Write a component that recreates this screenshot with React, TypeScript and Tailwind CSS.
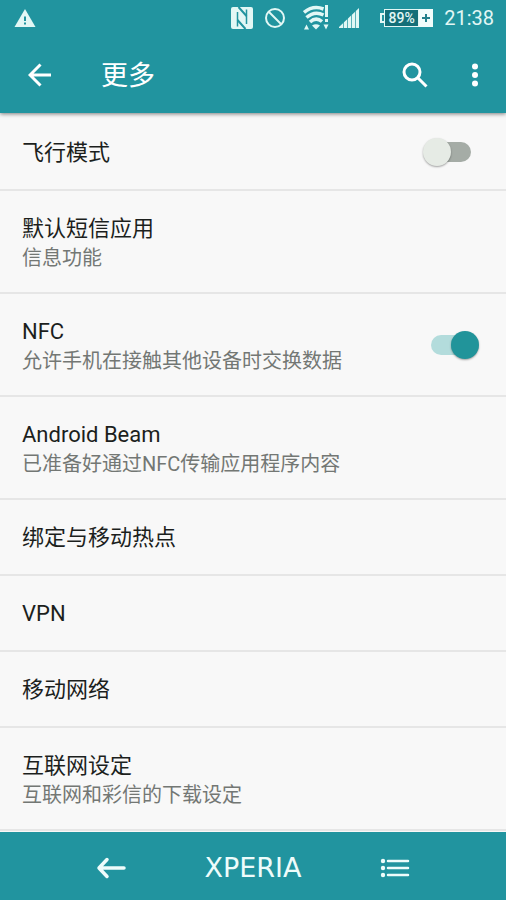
import { useState } from "react";

interface Setting {
  id: string;
  title: string;
  summary?: string;
  toggle?: boolean;
}

const settings: Setting[] = [
  { id: "airplane", title: "飞行模式", toggle: true },
  { id: "sms", title: "默认短信应用", summary: "信息功能" },
  { id: "nfc", title: "NFC", summary: "允许手机在接触其他设备时交换数据", toggle: true },
  { id: "beam", title: "Android Beam", summary: "已准备好通过NFC传输应用程序内容" },
  { id: "tethering", title: "绑定与移动热点" },
  { id: "vpn", title: "VPN" },
  { id: "mobile", title: "移动网络" },
  { id: "internet", title: "互联网设定", summary: "互联网和彩信的下载设定" },
];

const StatusBar = () => (
  <div className="flex h-9 items-center pl-[14px] pr-3 text-[#e2f7f5]">
    <svg width="22" height="20" viewBox="0 0 22 20" aria-hidden="true">
      <path d="M11 1 L21.5 19 H.5 Z" fill="currentColor" />
      <path d="M11 8.5 V13 M11 14.5 V16.5" stroke="#21949f" strokeWidth="2" />
    </svg>
    <div className="ml-auto flex items-center">
      <svg width="22" height="22" viewBox="0 0 22 22" aria-hidden="true">
        <rect x="0" y="0" width="22" height="22" rx="2" fill="currentColor" />
        <path d="M6.500 5 V19.500 M15.500 2.500 V17" stroke="#21949f" strokeWidth="1.5" />
        <path d="M7.500 0 L15.500 9 M6.500 13 L14.500 22" stroke="#21949f" strokeWidth="2" />
      </svg>
      <svg className="ml-3" width="20" height="20" viewBox="0 0 20 20" fill="none" stroke="currentColor" strokeWidth="2" aria-hidden="true">
        <circle cx="10" cy="10" r="9" />
        <path d="M3.500 3.500 L16.500 16.500" />
      </svg>
      <svg className="ml-[18px]" width="26" height="26" viewBox="0 0 26 26" aria-hidden="true">
        <g fill="none" stroke="currentColor" strokeWidth="3.5">
          <path d="M1 7.500 Q10 0 20.500 4" />
          <path d="M3.500 12.500 Q11.500 5.500 20.500 10" />
          <path d="M7 17 Q13 11.500 19 16.500" />
        </g>
        <g fill="currentColor">
          <path d="M9 20.500 Q13 18 17 20.500 L13 24.500 Z" />
          <path d="M1 24.500 L3.500 19.500 L6 24.500 Z" />
          <path d="M20.500 19.500 H25.500 L23 24.500 Z" />
          <path d="M22 0 H25 V12 H22 Z M22 14 H25 V17 H22 Z" />
        </g>
      </svg>
      <svg className="ml-[10px]" width="20" height="22" viewBox="0 0 20 22" aria-hidden="true">
        <path d="M0 21 V20 L20 1 V21 Z" fill="currentColor" />
        <path d="M4.500 1 V21 M8.500 1 V21 M12.500 1 V21 M16.500 1 V21" stroke="#21949f" strokeOpacity="0.7" />
      </svg>
      <div className="ml-[21px] flex items-center">
        <span className="h-[10px] w-1 border-y-2 border-l-2 border-current" />
        <span className="flex h-[18px] w-[35px] items-center justify-center border border-current bg-[#146f78] text-[14px] leading-none font-medium">
          89%
        </span>
        <span className="flex h-[18px] w-[14px] items-center justify-center bg-[#f1fcfb]">
          <svg width="8" height="8" viewBox="0 0 8 8" aria-hidden="true">
            <path d="M4 0 V8 M0 4 H8" stroke="#21808b" strokeWidth="2" />
          </svg>
        </span>
      </div>
      <time className="ml-[11px] text-[20px] leading-6">21:38</time>
    </div>
  </div>
);

const AppBar = () => (
  <div className="flex h-[77px] items-center pr-[7px] pl-4 text-white">
    <button type="button" aria-label="返回" className="flex size-12 items-center justify-center">
      <svg width="24" height="24" viewBox="0 0 24 24" fill="none" stroke="currentColor" strokeWidth="3" aria-hidden="true">
        <path d="M23 12 H2 M12.500 1.500 L2 12 L12.500 22.500" />
      </svg>
    </button>
    <h1 className="ml-[37px] pt-0.5 text-[27px] leading-9">更多</h1>
    <button type="button" aria-label="搜索" className="ml-auto flex size-12 items-center justify-center">
      <svg width="26" height="26" viewBox="0 0 26 26" fill="none" stroke="currentColor" strokeWidth="3" aria-hidden="true">
        <circle cx="10" cy="10" r="8" />
        <path d="M15.500 15.500 L24.500 24.500" />
      </svg>
    </button>
    <button type="button" aria-label="更多选项" className="ml-3 flex size-12 items-center justify-center">
      <svg width="6" height="24" viewBox="0 0 6 24" fill="currentColor" aria-hidden="true">
        <circle cx="3" cy="3.500" r="3" />
        <circle cx="3" cy="12" r="3" />
        <circle cx="3" cy="20.500" r="3" />
      </svg>
    </button>
  </div>
);

const RowText = ({ title, summary }: { title: string; summary?: string }) => (
  <span className="flex flex-col pt-0.5">
    <span className="text-[22px] leading-[30px] text-[#1c1f1d]">{title}</span>
    {summary && <span className="text-[20px] leading-7 text-[#737774]">{summary}</span>}
  </span>
);

const NavBar = () => (
  <nav className="flex h-[68px] items-center justify-center gap-[72px] bg-[#21949f] pt-1 text-[#eefcfb]">
    <button type="button" aria-label="返回" className="flex h-12 w-[30px] items-center justify-center">
      <svg width="30" height="22" viewBox="0 0 30 22" fill="none" stroke="currentColor" strokeWidth="3.5" strokeLinecap="round" aria-hidden="true">
        <path d="M28 11 H3 M11 2.500 L3 11 L11 19.500" strokeLinejoin="round" />
      </svg>
    </button>
    <button type="button" className="w-[110px] text-[27px] leading-9 font-['DejaVu_Sans',sans-serif]">
      XPERIA
    </button>
    <button type="button" aria-label="最近使用" className="flex h-12 w-[30px] items-center justify-center">
      <svg width="30" height="20" viewBox="0 0 30 20" fill="currentColor" aria-hidden="true">
        <circle cx="3" cy="3" r="2.200" />
        <circle cx="3" cy="10" r="2.200" />
        <circle cx="3" cy="17" r="2.200" />
        <path d="M8 3 H28 M8 10 H28 M8 17 H28" stroke="currentColor" strokeWidth="2.500" strokeLinecap="round" />
      </svg>
    </button>
  </nav>
);

const App = () => {
  const [enabled, setEnabled] = useState<Record<string, boolean>>({ airplane: false, nfc: true });

  return (
    <div className="flex min-h-screen flex-col bg-[#f8f8f8] font-['Roboto','Noto_Sans_CJK_SC',sans-serif]">
      <header className="relative bg-[#21949f] shadow-[0_1px_4px_rgba(0,0,0,0.5)]">
        <StatusBar />
        <AppBar />
      </header>

      <main className="flex-1">
        <ul className="pt-0.5">
          {settings.map((item) => {
            const height = item.summary ? "min-h-[103px]" : "min-h-[76px]";

            return (
              <li key={item.id} className={`flex border-b-2 border-[#e6e6e6] ${height}`}>
                {item.toggle ? (
                  <label className="flex flex-1 items-center justify-between pr-[35px] pl-[22px]">
                    <RowText title={item.title} summary={item.summary} />
                    <input
                      type="checkbox"
                      role="switch"
                      checked={enabled[item.id]}
                      onChange={(e) => setEnabled({ ...enabled, [item.id]: e.target.checked })}
                      className="relative h-5 w-10 appearance-none rounded-full bg-[#a5aca6] before:absolute before:-top-1 before:-left-2 before:size-7 before:rounded-full before:bg-[#e6ebe5] before:shadow-[0_1px_2px_rgba(0,0,0,0.35)] checked:bg-[#b3dcdc] checked:before:left-5 checked:before:bg-[#21949a]"
                    />
                  </label>
                ) : (
                  <button type="button" className="flex flex-1 items-center pl-[22px] text-left">
                    <RowText title={item.title} summary={item.summary} />
                  </button>
                )}
              </li>
            );
          })}
        </ul>
      </main>

      <NavBar />
    </div>
  );
};

export default App;
